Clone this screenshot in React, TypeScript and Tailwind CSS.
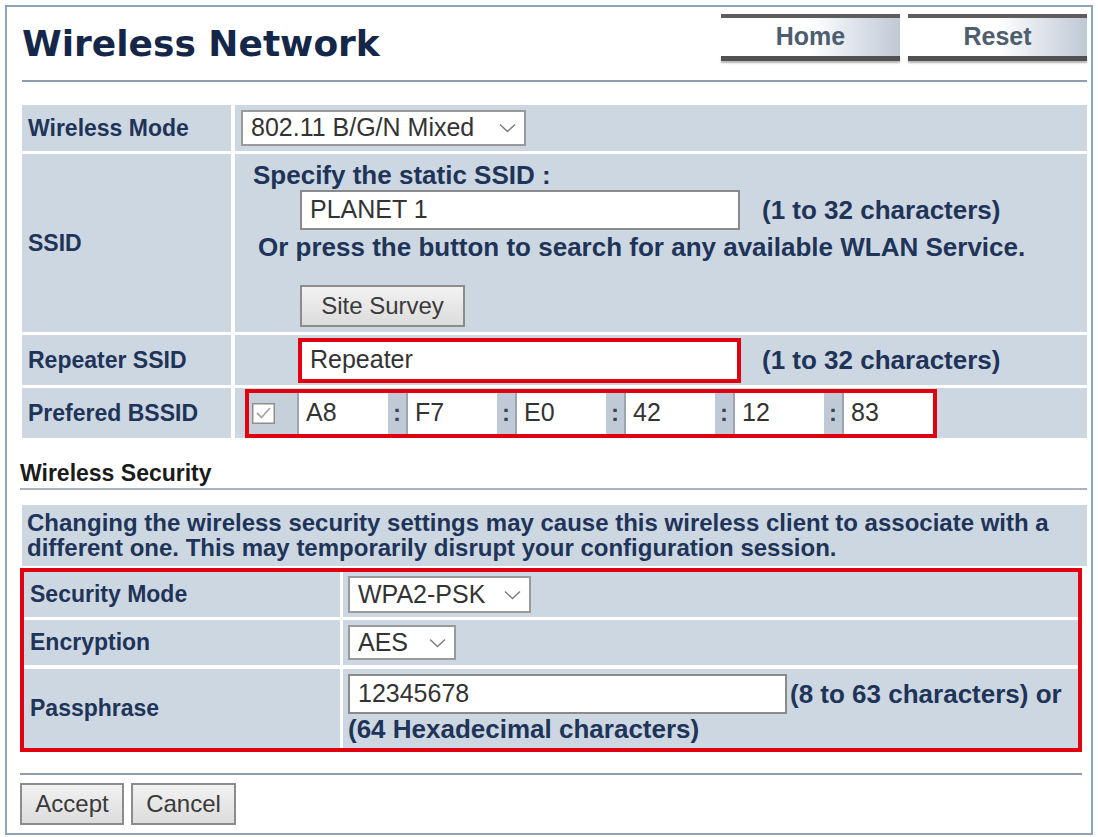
import React from 'react';

const label = "flex items-center pl-[6px] bg-[#cdd7e1] text-[23px] font-bold text-[#1f3459]";
const note = "text-[26px] font-bold text-[#1f3459] whitespace-nowrap";

function Chevron() {
  return (
    <svg width="17" height="10" viewBox="0 0 17 10" className="shrink-0">
      <polyline points="1,1.5 8.5,8.5 16,1.5" fill="none" stroke="#7c7c7c" strokeWidth="1.4" />
    </svg>
  );
}

function Select({ value, className }: { value: string; className: string }) {
  return (
    <div className={`flex items-center justify-between bg-white border-2 border-[#9a9a9a] pl-[8px] pr-[8px] text-[25px] text-[#333] ${className}`}>
      <span className="whitespace-nowrap">{value}</span>
      <Chevron />
    </div>
  );
}

function TextBox({ value, className }: { value: string; className: string }) {
  return (
    <div className={`flex items-center bg-white pl-[8px] text-[25px] text-[#333] whitespace-nowrap ${className}`}>
      {value}
    </div>
  );
}

function NavButton({ text }: { text: string }) {
  return (
    <div className="flex flex-col w-[179px] h-[47px]">
      <div className="h-[4px] bg-[#5d5d5d]" />
      <div className="flex-1 flex items-center justify-center bg-linear-to-r from-white via-white to-[#bfc9d5] text-[25px] font-bold text-[#4e5e6e]">
        {text}
      </div>
      <div className="h-[5px] bg-[#515151] shadow-[0_2px_2px_rgba(0,0,0,0.3)]" />
    </div>
  );
}

function Check() {
  return (
    <svg width="23" height="21" viewBox="0 0 23 21">
      <rect x="0.75" y="0.75" width="21.5" height="19.5" fill="#fff" stroke="#8e8e8e" strokeWidth="1.5" />
      <polyline points="5,10 9.5,14.5 18,5" fill="none" stroke="#a8a8a8" strokeWidth="1.8" />
    </svg>
  );
}

function Colon() {
  return (
    <div className="w-[18px] flex items-center justify-center bg-[#c0cad6] text-[24px] font-bold text-[#3a4656]">:</div>
  );
}

function Hex({ v }: { v: string }) {
  return (
    <div className="w-[91px] flex items-center bg-white border-l-2 border-[#9ba6b2] pl-[7px] text-[25px] text-[#333]">{v}</div>
  );
}

function Btn({ text, className }: { text: string; className: string }) {
  return (
    <div className={`flex items-center justify-center h-[42px] bg-linear-to-b from-[#f2f2f2] to-[#dcdcdc] border-2 border-[#8c8c8c] text-[24px] text-[#3a3a3a] ${className}`}>
      {text}
    </div>
  );
}

export default function App() {
  const bssid = ['A8', 'F7', 'E0', '42', '12', '83'];
  return (
    <div className="w-[1098px] h-[837px] bg-white font-['Liberation_Sans',Arial,sans-serif] overflow-hidden">
      <div className="ml-[5px] mt-[5px] w-[1088px] h-[830px] border-2 border-[#8fa3b9] flex flex-col">
        {/* header */}
        <div className="flex h-[73px] pl-[15px] pr-[4px]">
          <div className="mt-[19px] text-[36px] leading-none font-bold font-['DejaVu_Sans',sans-serif] text-[#152749]">
            Wireless Network
          </div>
          <div className="ml-auto mt-[7px] flex gap-[8px]">
            <NavButton text="Home" />
            <NavButton text="Reset" />
          </div>
        </div>
        <div className="ml-[15px] mr-[4px] h-[2px] bg-[#8e9cad]" />

        {/* wireless network table */}
        <div className="mt-[23px] ml-[15px] mr-[4px] flex flex-col gap-[3px]">
          <div className="flex h-[46px] gap-[4px]">
            <div className={`${label} w-[209px]`}>Wireless Mode</div>
            <div className="flex-1 flex items-center pl-[6px] bg-[#cdd7e1]">
              <Select value="802.11 B/G/N Mixed" className="w-[285px] h-[36px]" />
            </div>
          </div>

          <div className="flex h-[178px] gap-[4px]">
            <div className={`${label} w-[209px]`}>SSID</div>
            <div className="flex-1 flex flex-col pt-[6px] bg-[#cdd7e1]">
              <div className={`${note} pl-[18px] leading-[30px] h-[30px]`}>Specify the static SSID :</div>
              <div className="flex items-center h-[40px]">
                <TextBox value="PLANET 1" className="ml-[65px] w-[440px] h-[40px] border-2 border-[#8a8a8a]" />
                <span className={`${note} ml-[22px]`}>(1 to 32 characters)</span>
              </div>
              <div className={`${note} mt-[2px] pl-[23px] leading-[30px]`}>
                Or press the button to search for any available WLAN Service.
              </div>
              <Btn text="Site Survey" className="mt-[23px] ml-[65px] w-[165px]" />
            </div>
          </div>

          <div className="flex h-[50px] gap-[4px]">
            <div className={`${label} w-[209px]`}>Repeater SSID</div>
            <div className="flex-1 flex items-center bg-[#cdd7e1]">
              <TextBox value="Repeater" className="ml-[63px] w-[443px] h-[45px] border-4 border-[#e1000f]" />
              <span className={`${note} ml-[21px]`}>(1 to 32 characters)</span>
            </div>
          </div>

          <div className="flex h-[50px] gap-[4px]">
            <div className={`${label} w-[209px]`}>Prefered BSSID</div>
            <div className="flex-1 flex items-center bg-[#cdd7e1]">
              <div className="ml-[10px] w-[692px] h-[49px] border-4 border-[#e1000f] flex">
                <div className="w-[48px] flex items-center pl-[3px] bg-[#c6d0db]">
                  <Check />
                </div>
                {bssid.map((v, i) => (
                  <React.Fragment key={v}>
                    {i > 0 && <Colon />}
                    <Hex v={v} />
                  </React.Fragment>
                ))}
              </div>
            </div>
          </div>
        </div>

        {/* wireless security */}
        <div className="mt-[22px] ml-[13px] leading-[26px] text-[23px] font-bold text-[#1b1b1b]">Wireless Security</div>
        <div className="mt-[2px] ml-[13px] mr-[4px] h-[2px] bg-[#aab3be]" />

        <div className="mt-[15px] ml-[15px] mr-[4px] h-[61px] bg-[#cdd7e1] pl-[5px] pt-[5px] text-[24px] leading-[25px] font-bold text-[#1f3459] whitespace-nowrap">
          Changing the wireless security settings may cause this wireless client to associate with a
          <br />
          different one. This may temporarily disrupt your configuration session.
        </div>

        <div className="mt-[2px] ml-[13px] w-[1062px] h-[184px] border-4 border-[#e1000f] flex flex-col bg-white">
          <div className="flex h-[45px] gap-[3px]">
            <div className={`${label} w-[316px]`}>Security Mode</div>
            <div className="flex-1 flex items-center pl-[5px] bg-[#cdd7e1]">
              <Select value="WPA2-PSK" className="w-[183px] h-[37px]" />
            </div>
          </div>
          <div className="flex h-[45px] gap-[3px] mt-[3px]">
            <div className={`${label} w-[316px]`}>Encryption</div>
            <div className="flex-1 flex items-center pl-[5px] bg-[#cdd7e1]">
              <Select value="AES" className="w-[108px] h-[35px]" />
            </div>
          </div>
          <div className="flex flex-1 gap-[3px] mt-[4px]">
            <div className={`${label} w-[316px]`}>Passphrase</div>
            <div className="flex-1 flex flex-col pl-[5px] pt-[5px] bg-[#cdd7e1]">
              <div className="flex items-center">
                <TextBox value="12345678" className="w-[439px] h-[40px] border-2 border-[#8a8a8a]" />
                <span className={`${note} ml-[3px]`}>(8 to 63 characters) or</span>
              </div>
              <div className={`${note} leading-[30px]`}>(64 Hexadecimal characters)</div>
            </div>
          </div>
        </div>

        <div className="mt-[21px] ml-[13px] w-[1062px] h-[2px] bg-[#8e9cad]" />
        <div className="mt-[8px] ml-[13px] flex gap-[7px]">
          <Btn text="Accept" className="w-[104px]" />
          <Btn text="Cancel" className="w-[105px]" />
        </div>
      </div>
    </div>
  );
}
